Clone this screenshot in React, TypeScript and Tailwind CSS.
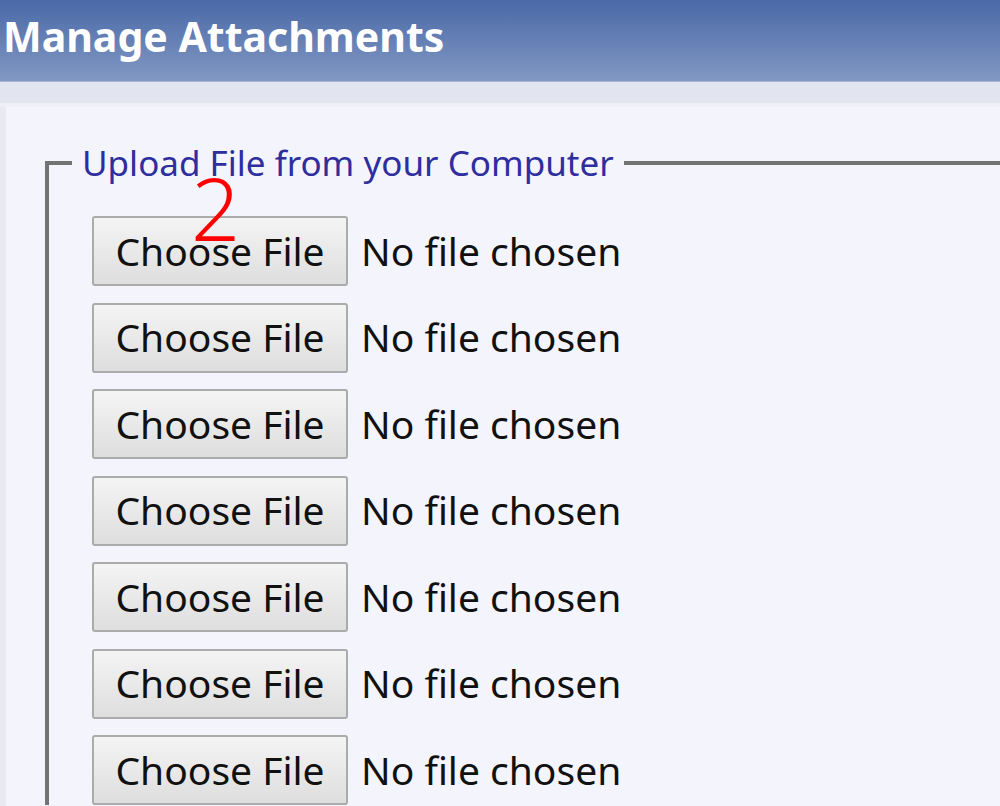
const rows = [0, 1, 2, 3, 4, 5, 6];

const FileRow = () => (
  <div className="flex items-center h-[70px] shrink-0">
    <div className="flex items-center justify-center w-[256px] h-[70px] rounded-[3px] border-2 border-[#ababab] bg-gradient-to-b from-[#f4f4f4] to-[#dedede] text-[39px] text-[#111]">
      Choose File
    </div>
    <span className="ml-[13px] text-[39px] text-[#111]">No file chosen</span>
  </div>
);

export default function App() {
  return (
    <div className="relative w-[1000px] h-[806px] overflow-hidden bg-[#f4f4fc] font-['Noto_Sans',sans-serif]">
      <header className="h-[82px] bg-gradient-to-b from-[#4a69a7] to-[#8298c3] border-b border-[#a5b2d2]">
        <h1 className="pl-[3px] pt-[8px] text-[41px] font-bold leading-[56px] text-white">
          Manage Attachments
        </h1>
      </header>
      <div className="h-[21px] bg-[#e2e4f0]" />
      <div className="h-[4px] bg-[#efeff6]" />
      <div className="flex h-full">
        <div className="w-[6px] shrink-0 bg-[#e9e9f2]" />
        <div className="flex-1 min-w-0 pl-[39px] pt-[36px]">
          <fieldset className="w-[1100px] border-t-[4px] border-l-[4px] border-[#737373] pl-[23px] pr-0 pt-[33px]">
            <legend className="px-[10px] text-[35px] leading-[40px] text-[#2e2e9e]">
              Upload File from your Computer
            </legend>
            <div className="flex flex-col gap-[16.5px] pl-[20px]">
              {rows.map((r) => (
                <FileRow key={r} />
              ))}
            </div>
          </fieldset>
        </div>
      </div>
      <span className="absolute left-[191px] top-[165px] text-[86px] font-light leading-none text-[#ff0000]">
        2
      </span>
    </div>
  );
}
